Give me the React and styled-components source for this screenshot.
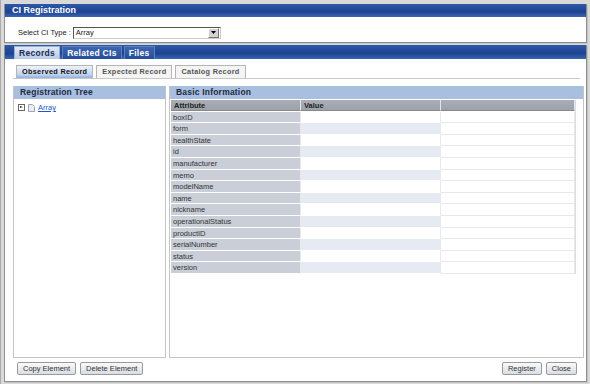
import React from "react";
import styled, { createGlobalStyle } from "styled-components";

const GlobalStyle = createGlobalStyle`
  html, body { margin: 0; padding: 0; }
  body {
    width: 590px;
    height: 384px;
    overflow: hidden;
    background: #d9d9d9;
    font-family: "Liberation Sans", Arial, sans-serif;
    font-size: 8px;
    color: #222;
  }
`;

const Page = styled.div`
  width: 590px;
  height: 384px;
  box-sizing: border-box;
  padding: 4px 3px 2px 3px;
  display: flex;
  flex-direction: column;
  gap: 2px;
  border-left: 1px solid #aaa;
`;

const Frame = styled.div`
  background: #fff;
  border: 1px solid #8e8e8e;
  border-top: none;
  box-shadow: 1px 1px 0 #c4c4c4;
  display: flex;
  flex-direction: column;
  flex: ${p => (p.$grow ? 1 : "none")};
  min-height: 0;
`;

const TitleBar = styled.div`
  height: 13px;
  background: linear-gradient(#2e58a8 0%, #1d4290 60%, #3b66b3 100%);
  color: #fff;
  font-weight: bold;
  font-size: 9px;
  line-height: 13px;
  padding-left: 7px;
`;

const SelectRow = styled.div`
  display: flex;
  align-items: center;
  height: 25px;
  box-sizing: border-box;
  padding: 6px 0 0 13px;
  gap: 2px;
  font-size: 7.5px;
`;

const FakeSelect = styled.div`
  width: 144px;
  height: 10px;
  border: 1px solid #555;
  border-right-color: #ccc;
  border-bottom-color: #ccc;
  display: flex;
  align-items: center;
  justify-content: space-between;
  padding-left: 2px;
  background: #fff;
  font-size: 7.5px;
`;

const Arrow = styled.div`
  width: 9px;
  height: 8px;
  margin-right: 1px;
  background: #d6d3ce;
  border: 1px solid #fff;
  border-right-color: #777;
  border-bottom-color: #777;
  display: flex;
  align-items: center;
  justify-content: center;
`;

const TabBar = styled.div`
  height: 14px;
  background: linear-gradient(#2e58a8 0%, #1d4290 60%, #3b66b3 100%);
  display: flex;
  align-items: flex-end;
  padding-left: 9px;
  gap: 2px;
`;

const MainTab = styled.div`
  height: 12px;
  padding: 0 4px;
  font-weight: bold;
  font-size: 8.5px;
  letter-spacing: 0.3px;
  line-height: 12px;
  color: ${p => (p.$active ? "#1b2b55" : "#fff")};
  background: ${p =>
    p.$active ? "linear-gradient(#dfe8f6, #b9cbe8)" : "linear-gradient(#3d66b2, #244c9a)"};
  border: 1px solid ${p => (p.$active ? "#9bb0d6" : "#5c7fc0")};
  border-bottom: none;
`;

const Body = styled.div`
  flex: 1;
  display: flex;
  flex-direction: column;
  padding: 6px 2px 6px 8px;
  min-height: 0;
`;

const SubTabs = styled.div`
  display: flex;
  gap: 3px;
  padding-left: 3px;
  border-bottom: 1px solid #c8c8c8;
  margin-right: 4px;
`;

const SubTab = styled.div`
  height: 12px;
  padding: 0 5px;
  font-size: 7.3px;
  font-weight: bold;
  line-height: 12px;
  color: ${p => (p.$active ? "#111" : "#555")};
  background: ${p =>
    p.$active ? "linear-gradient(#eef2f9 0%, #c4d4ee 70%, #8fb0de 100%)" : "#f4f4f4"};
  border: 1px solid #b5b5b5;
  border-bottom: none;
  letter-spacing: 0.3px;
`;

const Panels = styled.div`
  flex: 1;
  display: flex;
  gap: 3px;
  margin-top: 7px;
  min-height: 0;
`;

const Panel = styled.div`
  width: ${p => p.$w || "auto"};
  flex: ${p => (p.$w ? "none" : 1)};
  border: 1px solid #c4c4c4;
  border-top: none;
  display: flex;
  flex-direction: column;
`;

const PanelHead = styled.div`
  height: 13px;
  background: #a9bfdf;
  font-weight: bold;
  font-size: 8.5px;
  line-height: 13px;
  padding-left: 6px;
  color: #1e2a44;
  letter-spacing: 0.2px;
`;

const TreeItem = styled.div`
  display: flex;
  align-items: center;
  gap: 3px;
  padding: 4px 0 0 4px;
  font-size: 7.5px;
`;

const Expander = styled.div`
  width: 5px;
  height: 5px;
  border: 1px solid #666;
  background: #fff;
  position: relative;
  &::after {
    content: "";
    position: absolute;
    left: 1px;
    top: 1px;
    border-left: 3px solid #333;
    border-top: 1.5px solid transparent;
    border-bottom: 1.5px solid transparent;
  }
`;

const Link = styled.span`
  color: #2255cc;
  text-decoration: underline;
`;

const Grid = styled.div`
  margin: 1px 7px 0 1px;
  display: grid;
  grid-template-columns: 130px 140px 1fr;
  grid-auto-rows: 11.6px;
  border-right: 1px solid #ddd;
`;

const Th = styled.div`
  background: linear-gradient(#a9adb6, #9da1aa);
  font-weight: bold;
  font-size: 7.5px;
  line-height: 11px;
  padding-left: 3px;
  color: #222;
  border-right: 1px solid #e6e6e6;
  border-bottom: 1px solid #888;
  height: 10px;
  margin-bottom: 2px;
`;

const Td = styled.div`
  font-size: 7.5px;
  line-height: 11px;
  padding-left: 2px;
  color: #333;
  border-bottom: 1px solid #fff;
  border-right: 1px solid #e8e8e8;
  background: ${p =>
    p.$kind === "attr" ? "#c9ced8" : p.$kind === "alt" ? "#e6eaf2" : "#fff"};
  ${p => p.$kind === "blank" && "border-bottom-color: #e8e8e8;"}
`;

const Footer = styled.div`
  display: flex;
  justify-content: space-between;
  padding: 4px 7px 0 4px;
`;

const BtnGroup = styled.div`
  display: flex;
  gap: 4px;
`;

const Button = styled.button`
  height: 13px;
  padding: 0 5px;
  font-family: "Liberation Sans", Arial, sans-serif;
  font-size: 7.5px;
  color: #333;
  background: linear-gradient(#fafafa, #d9dde4);
  border: 1px solid #9a9a9a;
  border-radius: 2px;
  line-height: 11px;
`;

const attributes = [
  "boxID", "form", "healthState", "id", "manufacturer", "memo", "modelName",
  "name", "nickname", "operationalStatus", "productID", "serialNumber", "status", "version",
];

export default function App() {
  return (
    <>
      <GlobalStyle />
      <Page>
        <Frame>
          <TitleBar>CI Registration</TitleBar>
          <SelectRow>
            <span>Select CI Type :</span>
            <FakeSelect>
              Array
              <Arrow>
                <svg width="5" height="3" viewBox="0 0 5 3">
                  <path d="M0 0h5L2.5 3z" fill="#000" />
                </svg>
              </Arrow>
            </FakeSelect>
          </SelectRow>
        </Frame>
        <Frame $grow>
          <TabBar>
            <MainTab $active>Records</MainTab>
            <MainTab>Related CIs</MainTab>
            <MainTab>Files</MainTab>
          </TabBar>
          <Body>
            <SubTabs>
              <SubTab $active>Observed Record</SubTab>
              <SubTab>Expected Record</SubTab>
              <SubTab>Catalog Record</SubTab>
            </SubTabs>
            <Panels>
              <Panel $w="151px">
                <PanelHead>Registration Tree</PanelHead>
                <TreeItem>
                  <Expander />
                  <svg width="7" height="8" viewBox="0 0 7 8">
                    <path d="M0.5 0.5h4l2 2v5h-6z" fill="#e8edf5" stroke="#9aa4b4" />
                  </svg>
                  <Link>Array</Link>
                </TreeItem>
              </Panel>
              <Panel>
                <PanelHead>Basic Information</PanelHead>
                <Grid>
                  <Th>Attribute</Th>
                  <Th>Value</Th>
                  <Th />
                  {attributes.map((a, i) => (
                    <React.Fragment key={a}>
                      <Td $kind="attr">{a}</Td>
                      <Td $kind={i % 2 ? "alt" : "val"} />
                      <Td $kind="blank" />
                    </React.Fragment>
                  ))}
                </Grid>
              </Panel>
            </Panels>
            <Footer>
              <BtnGroup>
                <Button>Copy Element</Button>
                <Button>Delete Element</Button>
              </BtnGroup>
              <BtnGroup>
                <Button>Register</Button>
                <Button>Close</Button>
              </BtnGroup>
            </Footer>
          </Body>
        </Frame>
      </Page>
    </>
  );
}
